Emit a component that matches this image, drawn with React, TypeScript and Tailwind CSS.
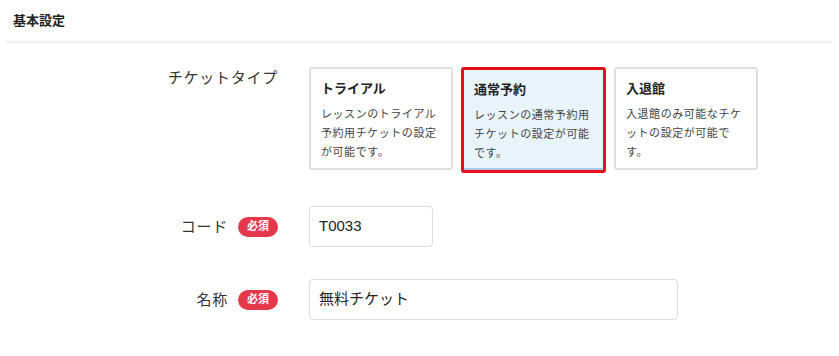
import { FC, JSX, ReactNode } from 'react';
import { clsx } from 'clsx';

interface TicketType {
  id: string;
  title: string;
  lines: string[];
}

const ticketTypes: TicketType[] = [
  { id: 'trial', title: 'トライアル', lines: ['レッスンのトライアル', '予約用チケットの設定', 'が可能です。'] },
  { id: 'regular', title: '通常予約', lines: ['レッスンの通常予約用', 'チケットの設定が可能', 'です。'] },
  { id: 'entry', title: '入退館', lines: ['入退館のみ可能なチケ', 'ットの設定が可能で', 'す。'] },
];

const font = 'font-["Liberation_Sans","Noto_Sans_CJK_JP",sans-serif]';

const RequiredBadge: FC = (): JSX.Element => (
  <span className="ml-[10px] inline-flex h-[20px] w-[40px] items-center justify-center rounded-full bg-[#e5384b] text-[11px] leading-none font-bold text-white">
    必須
  </span>
);

interface FormRowProps {
  label: string;
  required?: boolean;
  alignTop?: boolean;
  children: ReactNode;
}

const FormRow: FC<FormRowProps> = ({ label, required, alignTop, children }): JSX.Element => (
  <div className={clsx('flex', alignTop ? 'items-start' : 'items-center')}>
    <div className="flex w-[278px] shrink-0 items-center justify-end">
      <span className="text-[15px] leading-[22px] tracking-[0.05em] text-[#333]">{label}</span>
      {required && <RequiredBadge />}
    </div>
    <div className="ml-[31px]">{children}</div>
  </div>
);

const TicketCard: FC<{ ticket: TicketType; selected: boolean }> = ({ ticket, selected }): JSX.Element => (
  <div
    data-tag="ticket-card"
    className={clsx(
      'shrink-0 rounded-[3px] px-[10px] pt-[11px]',
      selected
        ? 'h-[106px] w-[145px] border-[3px] border-[#e60f1e] bg-[#e9f3fa] shadow-[inset_0_-2px_0_#a9cde6]'
        : 'h-[103px] w-[144px] border-2 border-[#dedede] bg-white',
    )}
  >
    <div className="text-[13px] leading-[18px] font-bold text-[#222]">{ticket.title}</div>
    <div className="mt-[7px] text-[11px] leading-[19px] tracking-[0.05em] text-[#444]">
      {ticket.lines.map(line => (
        <div
          key={line}
          className="whitespace-nowrap"
        >
          {line}
        </div>
      ))}
    </div>
  </div>
);

export default function App(): JSX.Element {
  return (
    <div className={clsx('h-[356px] w-[839px] overflow-hidden bg-white', font)}>
      <div className="flex h-[41px] items-center px-[13px] text-[13px] font-bold text-[#222]">基本設定</div>
      <div className="mr-[7px] ml-[5px] h-[2px] bg-[#f1f1f1]" />

      <div className="flex flex-col pt-[24px]">
        <FormRow
          label="チケットタイプ"
          alignTop
        >
          <div className="flex items-start gap-[8px]">
            {ticketTypes.map(ticket => (
              <TicketCard
                key={ticket.id}
                ticket={ticket}
                selected={ticket.id === 'regular'}
              />
            ))}
          </div>
        </FormRow>

        <div className="mt-[33px]">
          <FormRow
            label="コード"
            required
          >
            <div className="flex h-[41px] w-[124px] items-center rounded-[4px] border border-[#dcdcdc] px-[9px] text-[15px] text-[#222]">
              T0033
            </div>
          </FormRow>
        </div>

        <div className="mt-[32px]">
          <FormRow
            label="名称"
            required
          >
            <div className="flex h-[41px] w-[369px] items-center rounded-[4px] border border-[#dcdcdc] px-[9px] text-[15px] text-[#222]">
              無料チケット
            </div>
          </FormRow>
        </div>
      </div>
    </div>
  );
}
